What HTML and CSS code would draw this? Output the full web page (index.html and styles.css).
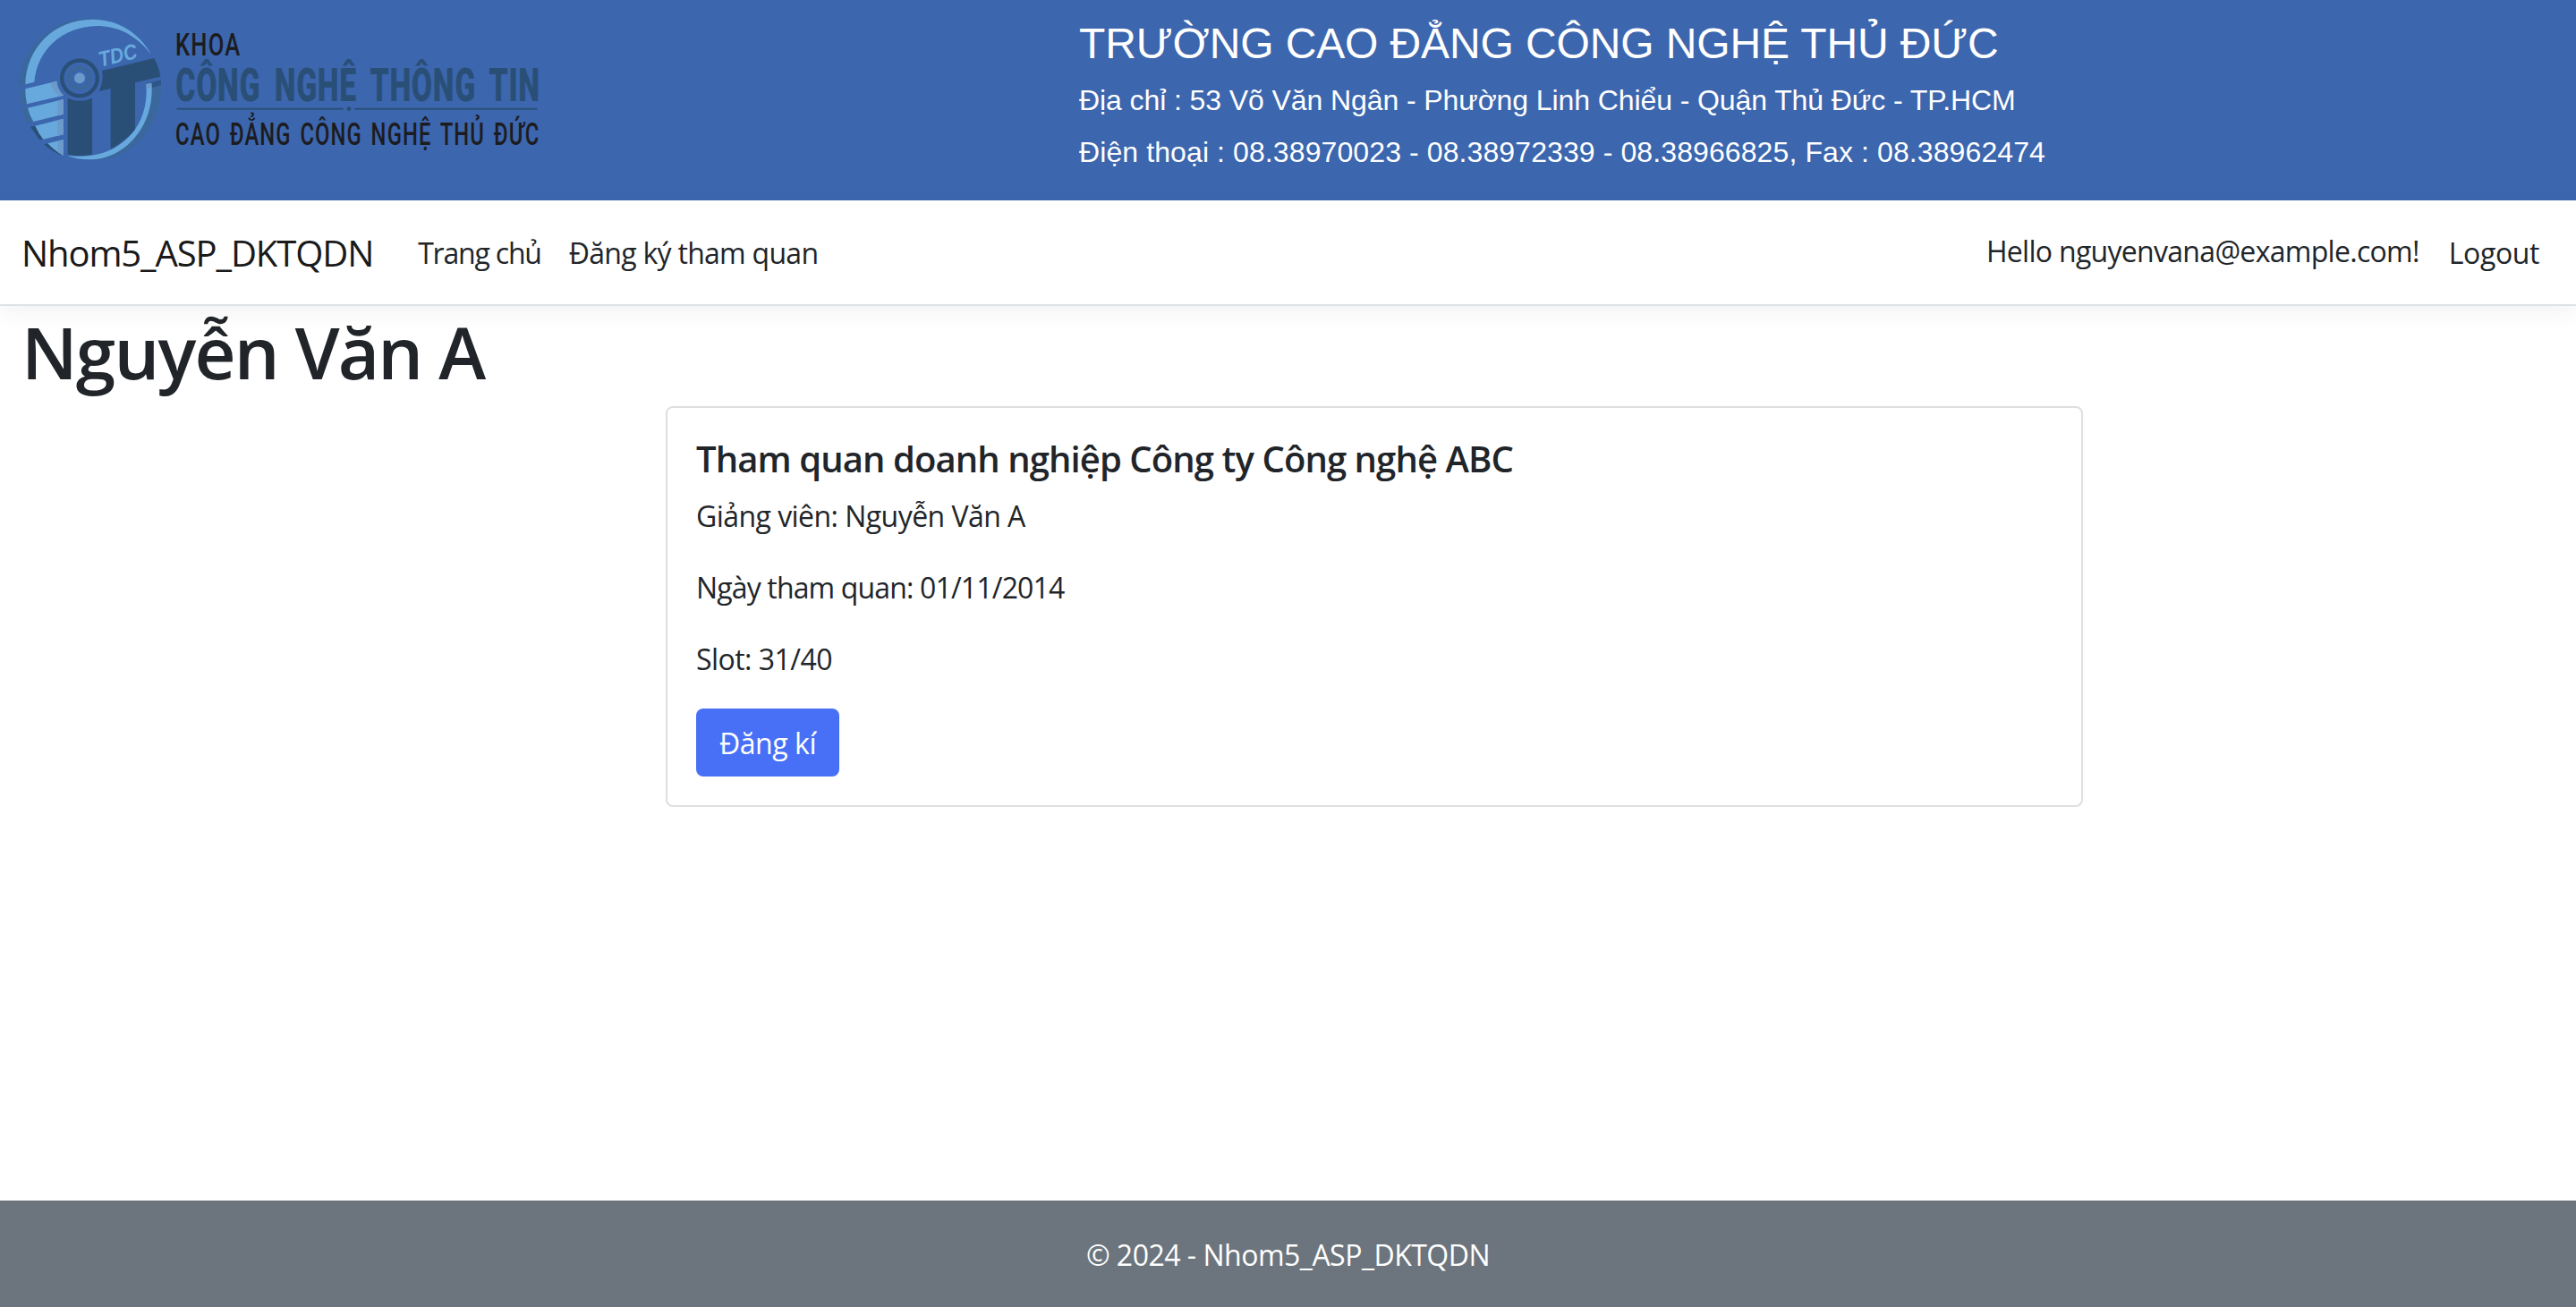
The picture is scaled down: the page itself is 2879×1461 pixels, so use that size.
FILE: index.html
```html
<!DOCTYPE html>
<html lang="vi">
<head>
<meta charset="utf-8">
<title>Nhom5_ASP_DKTQDN</title>
<link rel="stylesheet" href="styles.css">
</head>
<body>
<div class="banner">
  <svg class="logo" viewBox="0 0 3618 672" role="img" aria-label="Khoa Công nghệ thông tin">
    <!-- outer ring shadow -->
    <g class="teal">
      <path d="M62 291C70 160 170 62 300 62L310 66C180 66 88 160 86 284Z"/>
      <path d="M506 295L540 285C540 440 430 545 295 538C420 535 518 420 506 295Z"/>
      <path d="M65 303L85 298L90 349L69 353Z"/>
      <path d="M73 367L93 362L112 408L89 413Z"/>
    </g>
    <g class="navy">
      <path d="M102 426L118 422L145 467L132 468Z"/>
      <path d="M148 484L160 481L213 516L213 523Q175 510 148 484Z"/>
      <path d="M490 280L540 268L540 285L500 297Z" opacity=".7"/>
    </g>
    <!-- bright ring and stripes -->
    <g class="sky">
      <path d="M85 283C88 160 180 66 310 65C400 66 465 110 507 182C450 112 390 87 325 87C210 90 125 165 115 275Z"/>
      <path d="M490 282L508 278C520 420 420 535 300 535C270 535 245 530 225 521C260 527 300 524 330 517C435 490 500 400 490 282Z"/>
      <path d="M85 298L190 272Q192 300 213 320L90 349Q84 320 85 298Z"/>
      <path d="M93 362L213 333V383L112 408Q99 386 93 362Z"/>
      <path d="M118 422L213 398V451L145 467Q129 447 118 422Z"/>
      <path d="M160 481L213 468V522Q184 507 160 481Z"/>
    </g>
    <g class="steel">
      <path d="M171 277L190 272Q192 300 213 320L199 323Q173 304 171 277Z"/>
      <path d="M193 338L213 333V383L193 388Z"/>
      <path d="M193 403L213 398V451L193 456Z"/>
      <path d="M193 473L213 468V522L193 510Z"/>
      <path d="M490 282L508 278V294L492 297Z"/>
    </g>
    <!-- i and T -->
    <g class="navy">
      <path d="M227 329Q268 348 309 329V518Q268 526 227 518Z"/>
      <path d="M342 237L517 195Q533 225 538 257L453 277V434Q417 475 371 500V297L332 306Q349 270 342 237Z"/>
      <circle cx="267" cy="262" r="66"/>
    </g>
    <circle class="ground" cx="267" cy="262" r="53"/>
    <circle class="teal" cx="267" cy="262" r="41"/>
    <circle class="ground" cx="267" cy="262" r="28"/>
    <circle class="steel" cx="267" cy="262" r="18"/>
    <text class="tdc" x="337" y="224" transform="rotate(-13 337 224)" textLength="130" lengthAdjust="spacingAndGlyphs">TDC</text>
    <text class="name" x="588" y="185" textLength="220" lengthAdjust="spacingAndGlyphs">KHOA</text>
    <text class="major" x="589" y="339" textLength="1222" lengthAdjust="spacingAndGlyphs">CÔNG NGHÊ THÔNG TIN</text>
    <path class="rule" d="M593 365H1151M1189 365H1801"/>
    <circle class="navy" cx="1170" cy="365" r="7"/>
    <text class="name" x="588" y="486" textLength="1222" lengthAdjust="spacingAndGlyphs">CAO ĐẲNG CÔNG NGHỆ THỦ ĐỨC</text>
  </svg>
  <div class="school">
    <div class="school-name">TRƯỜNG CAO ĐẲNG CÔNG NGHỆ THỦ ĐỨC</div>
    <div class="address">Địa chỉ : 53 Võ Văn Ngân - Phường Linh Chiểu - Quận Thủ Đức - TP.HCM</div>
    <div class="phone">Điện thoại : 08.38970023 - 08.38972339 - 08.38966825, Fax : 08.38962474</div>
  </div>
</div>
<nav class="navbar">
  <a class="brand">Nhom5_ASP_DKTQDN</a>
  <a class="home">Trang chủ</a>
  <a class="visits">Đăng ký tham quan</a>
  <span class="hello">Hello nguyenvana@example.com!</span>
  <a class="logout">Logout</a>
</nav>
<main class="main">
  <h1 class="teacher">Nguyễn Văn A</h1>
  <section class="card">
    <h5 class="card-title">Tham quan doanh nghiệp Công ty Công nghệ ABC</h5>
    <p class="card-text">Giảng viên: Nguyễn Văn A</p>
    <p class="card-text date">Ngày tham quan: 01/11/2014</p>
    <p class="card-text">Slot: 31/40</p>
    <button class="btn">Đăng kí</button>
  </section>
</main>
<footer class="footer">© 2024 - Nhom5_ASP_DKTQDN</footer>
</body>
</html>
```
FILE: styles.css
```css
* { box-sizing: border-box; }
body {
  margin: 0;
  min-height: 1461px;
  display: flex;
  flex-direction: column;
  font: 32px/48px "Open Sans", "Noto Sans", sans-serif;
  color: #212529;
  background: #fff;
}

/* banner */
.banner {
  height: 224px;
  display: flex;
  background: #3c66ae;
  color: #fff;
  font-family: "Liberation Sans", Arial, sans-serif;
}
.logo { width: 1206px; height: 224px; flex: none; }
.teal { fill: #3b689c; }
.navy { fill: #2a4f77; }
.sky { fill: #67a9dd; }
.steel { fill: #6c9aca; }
.ground { fill: #3c66ae; }
.rule { stroke: #2a4f77; stroke-width: 6; }
.tdc { font: italic 700 72px "Liberation Sans", sans-serif; fill: #67a9dd; }
.name { font: 500 106px Roboto, sans-serif; letter-spacing: 5px; word-spacing: 12px; fill: #1c1c1f; }
.major { font: 900 154px Roboto, sans-serif; letter-spacing: 3px; word-spacing: 30px; fill: #2a4f77; }
.school {
  display: flex;
  flex-direction: column;
  gap: 10px;
  padding-top: 20px;
  white-space: nowrap;
}
.school-name { font-size: 48px; line-height: 58px; letter-spacing: -.12px; }
.address { letter-spacing: -.09px; }
.phone { letter-spacing: .1px; }

/* navbar */
.navbar {
  height: 118px;
  display: flex;
  align-items: center;
  padding: 2px 24px 0;
  border-bottom: 2px solid #dee2e6;
  box-shadow: 0 8px 24px rgba(0, 0, 0, .05);
  white-space: nowrap;
}
.brand { font-size: 40px; line-height: 60px; letter-spacing: -1.1px; margin-right: 50px; color: #1a1a1a; }
.home { letter-spacing: -1.2px; margin-right: 31px; }
.visits { letter-spacing: -.72px; }
.hello { margin-left: auto; padding-bottom: 4px; letter-spacing: -.7px; }
.logout { margin: 0 17px 0 33px; letter-spacing: -.4px; }

/* content */
.main { flex: 1; }
.teacher {
  margin: 0 24px 13px;
  padding-top: 3px;
  font-size: 80px;
  line-height: 96px;
  font-weight: 600;
  letter-spacing: -1.8px;
}
.card {
  width: 1584px;
  height: 448px;
  margin-left: 744px;
  padding: 33px 32px 32px;
  border: 2px solid #dfdfdf;
  border-radius: 8px;
}
.card-title { margin: 0 0 16px; font-size: 40px; line-height: 48px; font-weight: 600; letter-spacing: -.91px; }
.card-text { margin: 0 0 32px; letter-spacing: -.55px; }
.date { letter-spacing: -.85px; }
.btn {
  display: block;
  width: 160px;
  height: 76px;
  margin-top: -1px;
  padding: 2px 0 0;
  border: 0;
  border-radius: 8px;
  background: #4870f6;
  color: #fff;
  font: inherit;
  letter-spacing: -.45px;
}

.footer {
  height: 119px;
  background: #6c757d;
  color: #fff;
  text-align: center;
  line-height: 122px;
  letter-spacing: -.5px;
}
```
